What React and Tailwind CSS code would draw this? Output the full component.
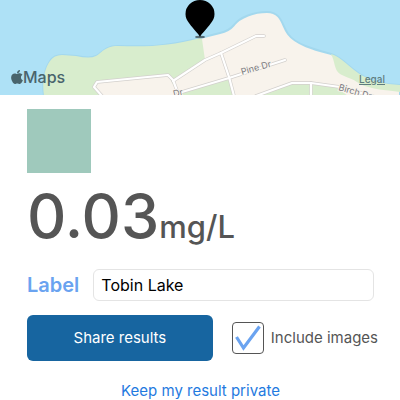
import React, { useState } from 'react';
import { FaApple } from 'react-icons/fa';

// Roads are a grey casing with a white line on top
const roads = [
  'M102 96 L94 87 L97 82 L168 75 L173 80 L179 96',
  'M173 81 L205 60 L221 53 L256 36 H264',
  'M182 92 L229 78 L285 60',
  'M221 53 L229 77 L234 96',
  'M256 96 L292 83 H311 L340 87 L400 104',
  'M311 83 V96',
];

function MapView() {
  return (
    <div className="relative h-[95px] w-full overflow-hidden bg-[#aee1f6]">
      <svg
        viewBox="0 0 400 95"
        preserveAspectRatio="xMidYMid slice"
        className="block h-full w-full"
        aria-label="Map of the sample location"
      >
        <path
          d="M44 96 C42 82 44 70 50 61 Q54 55 62 55 L76 56 Q90 59 96 56 C101 54 104 46 118 46 C150 47 170 46 200 38 L220 33 Q229 31 234 25 C240 17 254 12 267 12 C282 12 282 26 288 34 C296 45 316 50 331 54 C342 57 350 69 363 76 Q376 84 400 85 V96 Z"
          fill="#f8f3ec"
          stroke="#a3d8ee"
          strokeWidth="2"
        />
        <path
          d="M44 96 C42 82 44 70 50 61 Q54 55 62 55 L76 56 Q90 59 96 56 C101 54 104 46 118 46 C150 47 170 46 200 38 L202 39 L205 60 L173 81 L179 96 Z"
          fill="#d8edcd"
        />
        <path d="M97 82 L168 75 L179 96 H102 L94 87 Z" fill="#f8f3ec" />
        <path d="M178 93 L229 77 L234 96 H178 Z" fill="#d8edcd" />
        <path d="M256 96 L292 83 H311 L336 87 L348 96 Z" fill="#d8edcd" />
        <path
          d="M331 54 C342 57 350 69 363 76 Q376 84 400 85 V92 C385 90 370 89 360 84 C352 78 345 77 340 74 C334 70 335 61 331 54 Z"
          fill="#d8edcd"
        />
        <g fill="none" stroke="#d3d0cd" strokeWidth="3.5" strokeLinejoin="round" strokeLinecap="round">
          {roads.map((d) => (
            <path key={d} d={d} />
          ))}
        </g>
        <g fill="none" stroke="#fff" strokeWidth="2.2" strokeLinejoin="round" strokeLinecap="round">
          {roads.map((d) => (
            <path key={d} d={d} />
          ))}
        </g>
        <g
          fill="#77777c"
          stroke="#f8f3ec"
          strokeWidth="2"
          paintOrder="stroke"
          fontFamily="Inter, sans-serif"
          fontSize="9"
        >
          <text x="242" y="75" transform="rotate(-16 242 75)">Pine Dr</text>
          <text x="174" y="97" transform="rotate(-14 174 97)">Dr</text>
          <text x="338" y="90" transform="rotate(16 338 90)">Birch Dr</text>
        </g>
        <ellipse cx="200" cy="37" rx="5" ry="1.2" fill="#000" opacity="0.5" />
        <path
          d="M200 37 C198 33 194 30 189 23 C187 20 185.500 18 185.500 14 A14.500 14 0 0 1 214.500 14 C214.500 18 213 20 211 23 C206 30 202 33 200 37 Z"
          fill="#000"
        />
      </svg>
      <div className="absolute bottom-2 left-[11px] flex items-center text-[#49646c]">
        <FaApple className="h-4 w-3" />
        <span className="text-base leading-5 font-medium">Maps</span>
      </div>
      <a href="#legal" className="absolute right-[15px] bottom-2 text-[10px] leading-4 font-medium text-[#5f7d80] underline">
        Legal
      </a>
    </div>
  );
}

export default function App() {
  const [label, setLabel] = useState('Tobin Lake');
  const [includeImages, setIncludeImages] = useState(true);

  return (
    <div className="bg-white font-['Inter',sans-serif] text-[#555]">
      <MapView />
      <main className="pt-[14px] pr-[22px] pl-[27px]">
        <div className="size-16 bg-[#9fc9bc]" />
        <p className="mt-[13px] flex items-baseline leading-[60px]">
          <span className="text-[61px] font-medium">0.03</span>
          <span className="text-[31px] font-medium">mg/L</span>
        </p>
        <div className="mt-3 flex items-center gap-[14px] pr-1">
          <label htmlFor="label" className="text-xl font-semibold text-[#6aa3f0]">
            Label
          </label>
          <input
            id="label"
            type="text"
            value={label}
            onChange={(e) => setLabel(e.target.value)}
            className="h-8 min-w-0 flex-1 rounded-md border border-[#e4e4e4] px-[7px] text-base text-black"
          />
        </div>
        <div className="mt-[14px] flex items-center">
          <button type="button" className="h-[46px] flex-1 rounded-md bg-[#1765a0] text-[15px] text-white">
            Share results
          </button>
          <label className="ml-[19px] flex items-center gap-[7px] text-[15px]">
            <span className="relative size-8">
              <input
                type="checkbox"
                checked={includeImages}
                onChange={(e) => setIncludeImages(e.target.checked)}
                className="block size-8 appearance-none rounded-sm border border-[#555]"
              />
              {includeImages && (
                <svg viewBox="0 0 32 32" className="pointer-events-none absolute inset-0" fill="none">
                  <path d="M4.500 15 L11.500 26 L27.500 4.500" stroke="#6aa3f0" strokeWidth="3.2" />
                </svg>
              )}
            </span>
            Include images
          </label>
        </div>
        <div className="mt-[22px] pr-1 text-center">
          <a href="#private" className="block text-[15px] leading-4 text-[#1f7ae0]">
            Keep my result private
          </a>
        </div>
      </main>
    </div>
  );
}
